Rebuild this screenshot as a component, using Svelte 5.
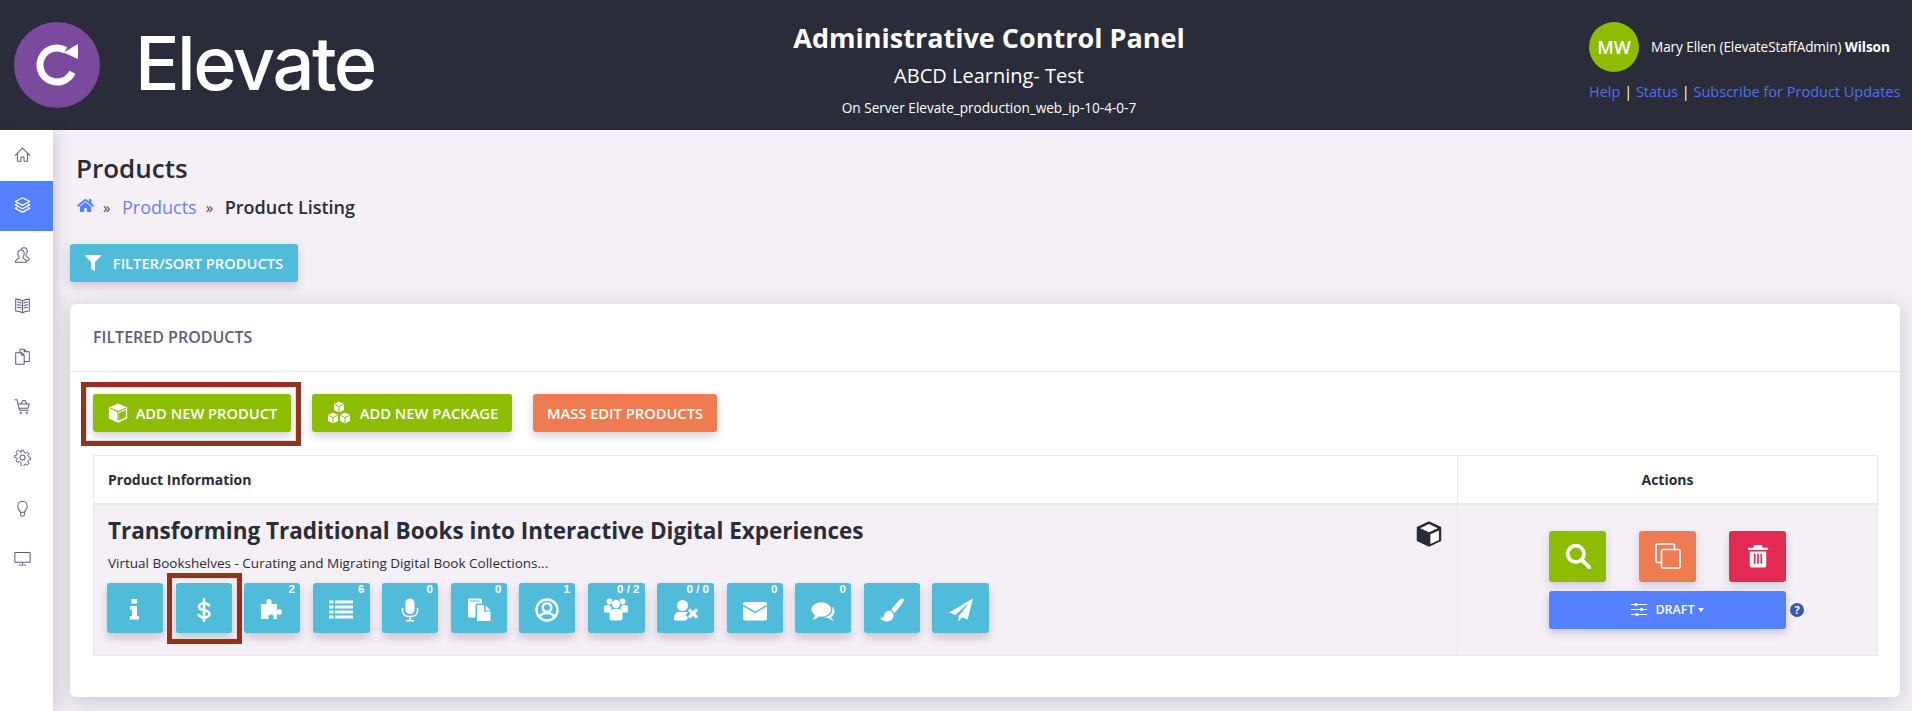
<script>
	const line = 'fill="none" stroke="#5c5e80" stroke-width="1.2" stroke-linecap="round" stroke-linejoin="round"';

	const nav = [
		{ name: 'home', svg: `<g ${line}><path d="M1.500 11 10 2.500l8.500 8.500M4 9v9h4.200v-5h3.600v5H16V9"/></g>` },
		{ name: 'layers', active: true, svg: `<g fill="none" stroke="#fff" stroke-width="1.500" stroke-linejoin="round"><path d="M10 2 18.500 6.500 10 11 1.500 6.500z"/><path d="M3.500 9.500 1.500 10.500 10 15l8.500-4.500-2-1"/><path d="M3.500 13.500 1.500 14.500 10 19l8.500-4.500-2-1"/></g>` },
		{ name: 'users', svg: `<g ${line}><path d="M1.500 18c0-3 2-3.500 4-4.500.8-.5.8-1.500.2-2.300C4.800 10 4.500 8.800 4.500 7.500c0-2.500 1.500-4 3.800-4s3.700 1.500 3.700 4c0 1.300-.4 2.500-1.200 3.700-.6.8-.6 1.800.2 2.300 2 1 4 1.500 4 4.500z"/><path d="M8.500 2.500C9.300 1.500 10.500 1 11.800 1c2.200 0 3.700 1.500 3.700 4 0 1.300-.4 2.500-1.200 3.700-.6.8-.6 1.800.2 2.300 1.500.8 3.500 1.500 3.500 3.500 0 1-.8 1.500-2.500 1.500"/></g>` },
		{ name: 'book', svg: `<g ${line}><path d="M10 4.500C7.500 3 5 2.500 2 2.500v14c3 0 5.500.5 8 2 2.500-1.500 5-2 8-2v-14c-3 0-5.500.5-8 2zM10 4.500v14"/><path d="M4 6c1.500 0 3 .3 4.300 1M4 9c1.500 0 3 .3 4.300 1M4 12c1.500 0 3 .3 4.300 1M16 6c-1.500 0-3 .3-4.300 1M16 9c-1.500 0-3 .3-4.300 1M16 12c-1.500 0-3 .3-4.300 1"/></g>` },
		{ name: 'files', svg: `<g ${line}><path d="M2 5.500h7l3 3V19H2zM9 5.500v3h3"/><path d="M7 5.500V1.500h5l3 3 3 0V16h-6M12 1.500v3h3"/></g>` },
		{ name: 'cart', svg: `<g ${line}><path d="M1 2h2.500l3 12.500h10.500"/><path d="M5 7h13l-1.500 5H6.200M8 7l2.500-4L13 3l2 4"/></g><circle cx="8" cy="17.500" r="1.200" fill="#5c5e80"/><circle cx="15" cy="17.500" r="1.200" fill="#5c5e80"/>` },
		{ name: 'gear', svg: `<g ${line}><circle cx="10" cy="10" r="3"/><path d="M8.500 1.500h3l.5 2.500 1.700.8 2.200-1.300 2 2.200-1.300 2.100.7 1.700 2.400.5v3l-2.400.5-.7 1.700 1.300 2.100-2 2.200-2.200-1.300-1.700.8-.5 2.400h-3L8 16l-1.700-.8-2.200 1.300-2-2.200 1.300-2.100-.7-1.700L.3 10V8l2.400-.5.7-1.700L2.100 3.700l2-2.200 2.200 1.300L8 4z" transform="translate(.4 .2) scale(.96)"/></g>` },
		{ name: 'bulb', svg: `<g ${line}><path d="M7.500 14.500C7 12 4.500 11 4.500 7.500 4.500 4 7 1.500 10 1.500s5.500 2.500 5.500 6c0 3.500-2.500 4.500-3 7zM7.800 14.500V17.500c0 .8 1 1.500 2.200 1.500s2.200-.7 2.200-1.500v-3"/></g>` },
		{ name: 'desktop', svg: `<g ${line}><path d="M1 3h18v11.500H1zM10 14.500V18M6 18h8"/></g><path d="M6 17h8v1.500H6z" fill="#b9b9c6"/>` }
	];

	const w = 'fill="#fff"';
	const bg = '#50bcda';
	const tools = [
		{ name: 'info', svg: `<path ${w} d="M8.500 1h5.500v4.500H8.500zM7 8h7v10h2v3.500H7V18h2v-6.500H7z"/>` },
		{ name: 'price', svg: `<g fill="none" stroke="#fff" stroke-width="2.600" stroke-linecap="round"><path d="M17 7.500c-1-1.500-2.800-2.300-5-2.300-3 0-5 1.500-5 3.500 0 5 10.500 2 10.500 7.300 0 2-2.300 3.500-5.500 3.500-2.300 0-4.300-.9-5.300-2.500"/><path d="M12 1v22"/></g>` },
		{ name: 'modules', badge: '2', svg: `<path ${w} d="M1 6h5.500c.5 0 .5-.8 0-1.500C6 3.500 6.500 1 9 1s3 2.500 2.500 3.500c-.5.7-.5 1.500 0 1.500H17v5.500c0 .5.8.5 1.500 0 1-.5 3.500-.5 3.500 2.500s-2.500 3-3.500 2.500c-.7-.5-1.500-.5-1.500 0V21h-3.500c-.5 0-.5-.8 0-1.500.5-1 0-3-2.500-3s-3 2-2.500 3c.5.7.5 1.500 0 1.500H1z"/>` },
		{ name: 'list', badge: '6', wide: true, svg: `<path ${w} d="M0 2.500h4.500v3H0zM6 2.500h18v3H6zM0 7.500h4.500v3H0zM6 7.500h18v3H6zM0 12.500h4.500v3H0zM6 12.500h18v3H6zM0 17.500h4.500v3H0zM6 17.500h18v3H6z"/>` },
		{ name: 'audio', badge: '0', svg: `<rect ${w} x="7.500" y=".5" width="9" height="15.500" rx="4.500"/><path fill="none" stroke="#fff" stroke-width="1.500" d="M4.500 10v2.500c0 4 3 6 7.500 6s7.500-2 7.500-6V10M12 18.500v4M8 22.800h8"/>` },
		{ name: 'docs', badge: '0', svg: `<path ${w} d="M1 2A1.500 1.500 0 0 1 2.500.5h11A1.500 1.500 0 0 1 15 2v3.500h-5a1.500 1.500 0 0 0-1.500 1.500v12.500h-6A1.500 1.500 0 0 1 1 18z"/><path stroke="${bg}" stroke-width="1" d="M3 3h10"/><path ${w} d="M10 7h7v6.500h6.500V23H10z"/><path ${w} d="M18.500 7.500l5 5h-5z"/>` },
		{ name: 'person', badge: '1', svg: `<circle cx="12" cy="12" r="10.500" fill="none" stroke="#fff" stroke-width="2.400"/><circle cx="12" cy="9.500" r="4.300" fill="none" stroke="#fff" stroke-width="2.400"/><path fill="none" stroke="#fff" stroke-width="2.400" d="M4.500 19c1.500-3 4-4 7.500-4s6 1 7.500 4"/>` },
		{ name: 'group', badge: '0 / 2', wide: true, svg: `<circle ${w} cx="5.500" cy="3.500" r="3"/><circle ${w} cx="18.500" cy="3.500" r="3"/><circle ${w} cx="12" cy="6" r="4.500" stroke="${bg}" stroke-width=".8"/><path ${w} d="M0 9c0-1 1-2 2.500-2h3c.8 1.700 1.500 2.500 2.500 3-1.500 1-2.500 2.500-2.500 4.500H1.500C.5 14.500 0 14 0 13zM24 9c0-1-1-2-2.500-2h-3c-.8 1.700-1.500 2.500-2.500 3 1.500 1 2.500 2.500 2.500 4.500h4c1 0 1.500-.5 1.500-1.500z"/><path ${w} d="M9 11h6c2 0 3.500 1.500 3.500 3.500v6c0 1-1 2-2 2h-9c-1 0-2-1-2-2v-6c0-2 1.500-3.500 3.500-3.500z"/>` },
		{ name: 'remove', badge: '0 / 0', wide: true, svg: `<circle ${w} cx="8.500" cy="7.500" r="5.500"/><path ${w} d="M1.500 22.500c-1 0-1.500-1-1.500-2.500 0-3.500 2-6 5-6h7c1 0 1.500.2 2 .5l-2.500 2.500 2.800 2.800-2.500 2.700z"/><path fill="none" stroke="#fff" stroke-width="3.200" d="M15 11.500l8 8M23 11.500l-8 8"/>` },
		{ name: 'mail', badge: '0', svg: `<rect ${w} x="0" y="4" width="24" height="18.500" rx="2"/><path fill="none" stroke="${bg}" stroke-width="1.500" d="M0 7.500 12 14.500 24 7.500"/>` },
		{ name: 'chat', badge: '0', svg: `<ellipse ${w} cx="16" cy="13.500" rx="7.500" ry="6.500"/><path ${w} d="M19 18l3.500 4.500c-2 0-4.500-1.500-6-3z"/><ellipse ${w} cx="10.300" cy="11.500" rx="10.500" ry="7.800" stroke="${bg}" stroke-width="1.200"/><path ${w} d="M4.500 17 1.500 21.500c2.500 0 5-1 6.500-3z"/>` },
		{ name: 'brush', svg: `<path ${w} d="M22 .6c1.300-.6 2.300.7 1.700 1.900-1.700 3.600-6.500 10.200-9.200 12.400l-3.200-3.200C13.600 8.700 18.500 2.300 22 .6z"/><path ${w} d="M10.500 12.700l3 3c.3 3.500-1.500 7.800-6.500 7.800-3.200 0-6-1.300-7-4 1 .7 2.200.6 3-.2 1-1 1-3.700 3-5.300 1.200-1 3-1.500 4.500-1.300z"/>` },
		{ name: 'send', wide: true, svg: `<path ${w} d="M24 .5 0 14.500l6.200 2.600L20 5 9.500 18.300v5.200l3.500-4.300 5.600 2.300z"/>` }
	];
</script>

<header class="topbar">
	<div class="brand">
		<svg viewBox="0 0 86 86" width="86" height="86" aria-hidden="true">
			<circle cx="43" cy="43" r="43" fill="#7a4a9c" />
			<path d="M51.500 28.300A17 17 0 1 0 58.400 50.200" fill="none" stroke="#fff" stroke-width="7" />
			<path d="M64 22V37L49.500 30.500z" fill="#fff" />
		</svg>
		<span class="brand-name">Elevate</span>
	</div>

	<div class="panel-title">
		<h2>Administrative Control Panel</h2>
		<p class="org">ABCD Learning- Test</p>
		<p class="server">On Server Elevate_production_web_ip-10-4-0-7</p>
	</div>

	<div class="account">
		<div class="who">
			<span class="avatar">MW</span>
			<span class="who-name">Mary Ellen (ElevateStaffAdmin) <b>Wilson</b></span>
		</div>
		<div class="account-links">
			<a href="#help">Help</a> | <a href="#status">Status</a> | <a href="#subscribe">Subscribe for Product Updates</a>
		</div>
	</div>
</header>

<div class="shell">
	<nav class="sidebar">
		{#each nav as item}
			<a href="#{item.name}" class="nav-item" class:active={item.active} aria-label={item.name}>
				<svg viewBox="0 0 20 20" width="17" height="17">{@html item.svg}</svg>
			</a>
		{/each}
	</nav>

	<main class="content">
		<h1>Products</h1>
		<div class="crumbs">
			<svg class="crumb-home" viewBox="0 0 576 512" width="17" height="15" aria-hidden="true">
				<path fill="#5580ff" d="M280.37 148.26L96 300.11V464a16 16 0 0 0 16 16l112.06-.29a16 16 0 0 0 15.92-16V368a16 16 0 0 1 16-16h64a16 16 0 0 1 16 16v95.64a16 16 0 0 0 16 16.05L464 480a16 16 0 0 0 16-16V300L295.67 148.26a12.19 12.19 0 0 0-15.3 0zM571.6 251.47L488 182.56V44.05a12 12 0 0 0-12-12h-56a12 12 0 0 0-12 12v72.61L318.47 43a48 48 0 0 0-61 0L4.34 251.47a12 12 0 0 0-1.6 16.9l25.5 31A12 12 0 0 0 45.15 301l235.22-193.74a12.19 12.19 0 0 1 15.3 0L530.9 301a12 12 0 0 0 16.9-1.6l25.5-31a12 12 0 0 0-1.7-16.93z" />
			</svg>
			<span class="sep">»</span>
			<a href="#products">Products</a>
			<span class="sep">»</span>
			<span class="crumb-current">Product Listing</span>
		</div>

		<button class="btn teal filter">
			<svg viewBox="0 0 512 512" width="16" height="16" aria-hidden="true">
				<path fill="#fff" d="M487.976 0H24.028C2.71 0-8.047 25.866 7.058 40.971L192 225.941V432c0 7.831 3.821 15.17 10.237 19.662l80 55.98C298.02 518.69 320 507.493 320 487.98V225.941l184.947-184.97C520.021 25.896 509.338 0 487.976 0z" />
			</svg>
			FILTER/SORT PRODUCTS
		</button>

		<section class="card">
			<div class="card-head">FILTERED PRODUCTS</div>
			<div class="card-body">
				<div class="card-actions">
					<button class="btn green add-product">
						<svg viewBox="0 0 24 24" width="22" height="22" aria-hidden="true">
							<path d="M12 1.500 22 6v12l-10 4.500L2 18V6z" fill="#fff" />
							<path d="M3.500 6.800 12 10.500l8.500-3.700M12 10.500v10" fill="none" stroke="#8cbd00" stroke-width="1.300" />
							<path d="M13.200 12v8l7.300-3.200V8.800z" fill="#8cbd00" />
						</svg>
						ADD NEW PRODUCT
					</button>
					<button class="btn green add-package">
						<svg viewBox="0 0 26 24" width="26" height="24" aria-hidden="true">
							<g fill="#fff">
								<path d="M13 .5 18 3v6l-5 2.500L8 9V3z" />
								<path d="M7 11.500 12 14v6l-5 2.500L2 20v-6z" />
								<path d="M19 11.500 24 14v6l-5 2.500L14 20v-6z" />
							</g>
							<g fill="none" stroke="#8cbd00" stroke-width="1">
								<path d="M8.500 3.300 13 5.500l4.500-2.200M13 5.500v5.500M2.500 14.300 7 16.500l4.500-2.200M7 16.500V22M14.500 14.300 19 16.500l4.500-2.200M19 16.500V22" />
							</g>
						</svg>
						ADD NEW PACKAGE
					</button>
					<button class="btn orange mass-edit">MASS EDIT PRODUCTS</button>
				</div>

				<table class="products">
					<thead>
						<tr>
							<th class="info-col">Product Information</th>
							<th class="actions-col">Actions</th>
						</tr>
					</thead>
					<tbody>
						<tr>
							<td class="info-col">
								<div class="product-head">
									<h3>Transforming Traditional Books into Interactive Digital Experiences</h3>
									<svg viewBox="0 0 24 24" width="28" height="28" aria-hidden="true">
										<path d="M12 1 22.500 6v12L12 23 1.500 18V6z" fill="#2a2c39" />
										<path d="M12 3.500 19.500 7 12 10.500 4.500 7z" fill="#fff" />
										<path d="M13.200 12.300 20.500 9v8.200l-7.300 3.400z" fill="#fff" />
									</svg>
								</div>
								<p class="product-sub">Virtual Bookshelves - Curating and Migrating Digital Book Collections...</p>
								<div class="tools">
									{#each tools as tool}
										<button class="tool" class:wide={tool.wide} class:selected={tool.name === 'price'} aria-label={tool.name}>
											<svg viewBox="0 0 24 24" width="24" height="24">{@html tool.svg}</svg>
											{#if tool.badge}<span class="badge">{tool.badge}</span>{/if}
										</button>
									{/each}
								</div>
							</td>
							<td class="actions-col">
								<div class="row-actions">
									<div class="square-row">
										<button class="square green" aria-label="view">
											<svg viewBox="0 0 24 24" width="26" height="26">
												<circle cx="10" cy="10" r="7.500" fill="none" stroke="#fff" stroke-width="3.400" />
												<path d="M15.500 15.500 22.500 22.500" stroke="#fff" stroke-width="3.600" stroke-linecap="round" />
											</svg>
										</button>
										<button class="square orange" aria-label="copy">
											<svg viewBox="0 0 26 26" width="26" height="26" fill="none" stroke="#fff" stroke-width="1.700">
												<path d="M6 19.500H3a2 2 0 0 1-2-2V3a2 2 0 0 1 2-2h14.500a2 2 0 0 1 2 2v3" />
												<rect x="6.500" y="6.500" width="18.500" height="18.500" rx="1.500" />
											</svg>
										</button>
										<button class="square red" aria-label="delete">
											<svg viewBox="0 0 24 26" width="22" height="24">
												<path fill="#fff" d="M8 1h8l1.500 3H23v2.500H1V4h5.500z" />
												<path fill="#fff" fill-rule="evenodd" d="M3 8h18v15.500a2 2 0 0 1-2 2H5a2 2 0 0 1-2-2zM7.500 10.500v11h1.800v-11zM11.100 10.500v11h1.800v-11zM14.700 10.500v11h1.800v-11z" />
											</svg>
										</button>
									</div>
									<div class="status-row">
										<button class="btn blue status">
											<svg viewBox="0 0 16 15" width="16" height="15" aria-hidden="true">
												<path d="M0 2.500h16M0 7.500h16M0 12.500h16" stroke="#fff" stroke-width="1" />
												<rect x="3.500" y="1" width="3" height="3" rx="1" fill="#fff" />
												<rect x="9" y="6" width="3" height="3" rx="1" fill="#fff" />
												<rect x="4.500" y="11" width="3" height="3" rx="1" fill="#fff" />
											</svg>
											DRAFT<span class="caret"></span>
										</button>
										<span class="help" aria-label="help">?</span>
									</div>
								</div>
							</td>
						</tr>
					</tbody>
				</table>
			</div>
		</section>
	</main>
</div>

<style>
	:global(body) {
		background: #f4f0f6;
		color: #2a2c39;
		font-family: 'Open Sans', sans-serif;
	}

	.topbar {
		display: grid;
		grid-template-columns: 640px 698px 1fr;
		height: 130px;
		background: #2a2c39;
		color: #fff;
	}

	.brand {
		display: flex;
		align-items: center;
		padding-left: 14px;
	}

	.brand-name {
		margin-left: 35px;
		margin-top: -5px;
		font-family: Inter, sans-serif;
		font-size: 74px;
		font-weight: 500;
		letter-spacing: -2.500px;
		line-height: 1;
	}

	.panel-title {
		text-align: center;
		padding-top: 18px;
	}

	.panel-title h2 {
		margin: 0;
		font-size: 27px;
		font-weight: 700;
		line-height: 40px;
	}

	.org {
		margin: 4px 0 0;
		font-size: 20px;
		line-height: 27px;
	}

	.server {
		margin: 10px 0 0;
		font-size: 13.6px;
		line-height: 18px;
	}

	.account {
		padding: 22px 0 0 251px;
	}

	.who {
		display: flex;
		align-items: center;
		gap: 12px;
		font-size: 13.6px;
		letter-spacing: -0.1px;
	}

	.who-name {
		margin-top: -2px;
		white-space: nowrap;
	}

	.avatar {
		display: flex;
		align-items: center;
		justify-content: center;
		width: 50px;
		height: 50px;
		border-radius: 50%;
		background: #8cbd00;
		font-size: 18px;
		font-weight: 600;
	}

	.account-links {
		margin-top: 9px;
		font-size: 14.5px;
		line-height: 22px;
		white-space: nowrap;
	}

	.account-links a {
		color: #4d72f0;
		text-decoration: none;
	}

	.shell {
		display: flex;
		min-height: 581px;
	}

	.sidebar {
		flex: none;
		width: 53px;
		background: #fff;
		box-shadow: 4px 0 14px rgb(60 50 80 / 0.18);
		z-index: 1;
	}

	.nav-item {
		display: flex;
		align-items: center;
		justify-content: center;
		height: 50.6px;
		padding-right: 9px;
	}

	.nav-item svg {
		margin-top: -2.600px;
	}

	.nav-item.active {
		background: #5580ff;
	}

	.content {
		flex: 1;
		min-width: 0;
		padding: 20px 12px 14px 17px;
	}

	h1 {
		margin: 0 0 0 6px;
		font-size: 26px;
		font-weight: 600;
		line-height: 36px;
	}

	.crumbs {
		display: flex;
		align-items: center;
		height: 30px;
		margin: 6px 0 0 7px;
		font-size: 18px;
	}

	.crumb-home {
		margin-top: -3px;
	}

	.sep {
		width: 28px;
		padding-left: 9px;
		box-sizing: border-box;
		font-size: 15px;
		color: #444;
	}

	.crumbs a {
		color: #6c7fff;
		text-decoration: none;
	}

	.crumb-current {
		font-weight: 600;
	}

	.btn {
		display: inline-flex;
		align-items: center;
		justify-content: center;
		height: 38px;
		padding: 0;
		border: 0;
		border-radius: 3px;
		color: #fff;
		font-family: inherit;
		font-size: 14.700px;
		font-weight: 600;
		white-space: nowrap;
		box-shadow: 0 4px 8px rgb(50 40 70 / 0.22);
	}

	.teal {
		background: #50bcda;
	}

	.green {
		background: #8cbd00;
	}

	.orange {
		background: #ee7c50;
	}

	.red {
		background: #e42a52;
	}

	.blue {
		background: #5580ff;
	}

	.filter {
		display: flex;
		gap: 12px;
		width: 228px;
		margin-top: 22px;
	}

	.card {
		margin-top: 22px;
		height: 393px;
		box-sizing: border-box;
		border-radius: 6px;
		background: #fff;
		box-shadow: 0 4px 22px rgb(60 50 80 / 0.22);
	}

	.card-head {
		height: 68px;
		box-sizing: border-box;
		padding: 21px 23px 0;
		border-bottom: 1px solid #e6e6ec;
		color: #5d5f7a;
		font-size: 16px;
		font-weight: 600;
		line-height: 24px;
	}

	.card-body {
		padding: 22px 22px 0 23px;
	}

	.card-actions {
		display: flex;
		gap: 21px;
	}

	.add-product {
		position: relative;
		gap: 7px;
		width: 198px;
	}

	/* callout frames painted over the screenshot */
	.add-product::after,
	.tool.selected::after {
		content: '';
		position: absolute;
		border: 5px solid #93321f;
		box-shadow: inset 0 0 0 1px #ddd;
	}

	.add-product::after {
		inset: -12px -10px -14px -12px;
	}

	.tool.selected::after {
		inset: -10px -10px -11px -9px;
	}

	.add-package {
		gap: 8px;
		width: 200px;
	}

	.mass-edit {
		width: 184px;
	}

	.products {
		width: 1785px;
		margin-top: 23px;
		border-collapse: collapse;
		table-layout: fixed;
	}

	.products th,
	.products td {
		box-sizing: border-box;
		border: 1px solid #e8e8ee;
	}

	.products th {
		height: 48px;
		padding: 0;
		border-bottom-width: 2px;
		font-size: 14px;
		font-weight: 700;
	}

	.products th.info-col {
		width: 1364px;
		padding-left: 14px;
		text-align: left;
	}

	.products td {
		height: 152px;
		padding: 0;
		background: #f4f0f6;
		vertical-align: top;
	}

	.products td.info-col {
		padding: 8px 14px 0;
	}

	.product-head {
		display: flex;
		justify-content: space-between;
		align-items: flex-start;
	}

	.product-head svg {
		margin-top: 7px;
	}

	h3 {
		margin: 0;
		font-size: 22.500px;
		font-weight: 700;
		line-height: 36px;
	}

	.product-sub {
		margin: 5px 0 0;
		font-size: 13.5px;
		line-height: 18px;
	}

	.tools {
		display: flex;
		gap: 12.500px;
		margin: 11px 0 0 -1px;
	}

	.tool {
		position: relative;
		display: flex;
		align-items: center;
		justify-content: center;
		flex: none;
		width: 56px;
		height: 50px;
		padding: 0;
		border: 0;
		border-radius: 3px;
		background: #50bcda;
		box-shadow: 0 5px 9px rgb(50 40 70 / 0.22);
	}

	.tool.wide {
		width: 57px;
	}

	.tool svg {
		margin-top: 5px;
	}

	.badge {
		position: absolute;
		top: -1px;
		right: 5px;
		color: #fff;
		font-size: 11.500px;
		font-weight: 700;
		line-height: 14px;
		white-space: pre;
	}

	.row-actions {
		width: 237px;
		margin: 26px 0 0 91px;
	}

	.square-row {
		display: flex;
		justify-content: space-between;
	}

	.square {
		display: flex;
		align-items: center;
		justify-content: center;
		width: 57px;
		height: 51px;
		padding: 0;
		border: 0;
		border-radius: 3px;
		box-shadow: 0 4px 8px rgb(50 40 70 / 0.18);
	}

	.status-row {
		position: relative;
		margin-top: 9px;
	}

	.status {
		gap: 8px;
		width: 100%;
		font-size: 12.5px;
	}

	.caret {
		margin-left: -5px;
		border-top: 4px solid #fff;
		border-left: 3.5px solid transparent;
		border-right: 3.5px solid transparent;
	}

	.help {
		position: absolute;
		top: 12px;
		right: -18px;
		display: flex;
		align-items: center;
		justify-content: center;
		width: 14px;
		height: 14px;
		border-radius: 50%;
		background: #3d57ad;
		color: #fff;
		font-size: 11px;
		font-weight: 700;
	}
</style>
